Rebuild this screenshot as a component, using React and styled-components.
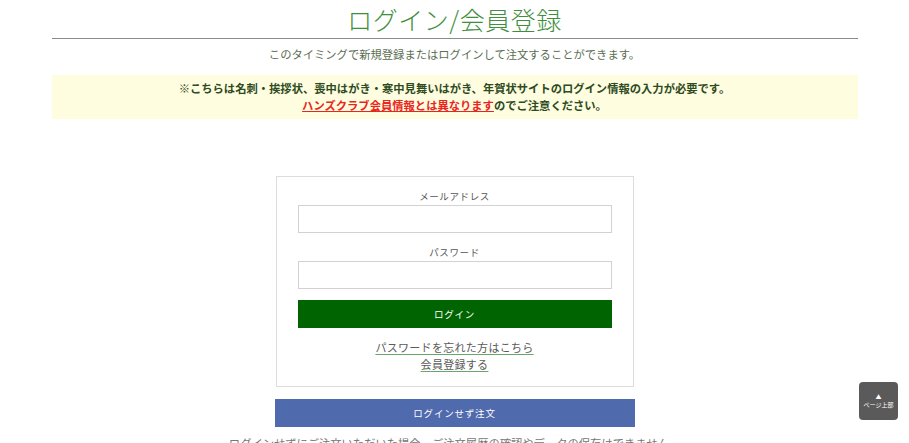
import React from "react";
import styled, { createGlobalStyle } from "styled-components";

const GlobalStyle = createGlobalStyle`
  body {
    margin: 0;
    background: #fff;
    font-family: "Noto Sans CJK JP", "Noto Sans", sans-serif;
  }
`;

const Page = styled.div`
  width: 806px;
  margin: 0 auto;
`;

const Title = styled.h1`
  margin: 0;
  height: 38px;
  border-bottom: 1px solid #8a8a8a;
  font-size: 25px;
  font-weight: 300;
  line-height: 38px;
  color: #3f8f3f;
  text-align: center;
  letter-spacing: 0.5px;
`;

const Lead = styled.p`
  margin: 7px 0 0;
  font-size: 11.3px;
  line-height: 16px;
  color: #5b6e52;
  text-align: center;
`;

const Notice = styled.div`
  margin-top: 13px;
  padding: 5px 0 5px;
  background: #fffde0;
  font-size: 11.3px;
  font-weight: 700;
  line-height: 17px;
  color: #2d4b1e;
  text-align: center;
`;

const Alert = styled.span`
  color: #e8261e;
  text-decoration: underline;
`;

const FormBox = styled.div`
  width: 314px;
  margin: 57px auto 0;
  padding: 12px 21px 13px;
  border: 1px solid #dcdcdc;
  display: flex;
  flex-direction: column;
`;

const Label = styled.div`
  font-size: 9.5px;
  line-height: 14px;
  color: #555;
  letter-spacing: 0.6px;
  text-align: center;
  margin-top: ${(p) => p.$gap || 0}px;
  margin-bottom: 2px;
`;

const Field = styled.input`
  box-sizing: border-box;
  width: 100%;
  height: 28px;
  border: 1px solid #d2d2d2;
  margin: 0;
`;

const LoginButton = styled.button`
  height: 28px;
  margin-top: 11px;
  border: none;
  background: #006400;
  color: #fff;
  font-family: inherit;
  font-size: 9.5px;
  letter-spacing: 0.8px;
`;

const Links = styled.div`
  margin-top: 11px;
  display: flex;
  flex-direction: column;
  align-items: center;
`;

const TextLink = styled.a`
  font-size: 11px;
  line-height: 17px;
  color: #5a5a5a;
  letter-spacing: 0.3px;
  text-decoration: underline;
  text-decoration-color: #66a866;
  text-underline-offset: 2px;
`;

const GuestButton = styled.button`
  display: block;
  width: 360px;
  height: 28px;
  margin: 12px auto 0;
  border: none;
  background: #4f6aad;
  color: #fff;
  font-family: inherit;
  font-size: 9.5px;
  letter-spacing: 0.8px;
`;

const Footnote = styled.p`
  margin: 8px 0 0;
  font-size: 11.3px;
  line-height: 16px;
  color: #777;
  text-align: center;
`;

const PageTop = styled.a`
  position: fixed;
  right: 11px;
  bottom: 23px;
  width: 39px;
  height: 38px;
  border-radius: 4px;
  background: #5a5a5a;
  color: #fff;
  display: flex;
  flex-direction: column;
  align-items: center;
  justify-content: center;
  font-size: 6px;
  line-height: 8px;
`;

export default function App() {
  return (
    <>
      <GlobalStyle />
      <Page>
        <Title>ログイン/会員登録</Title>
        <Lead>このタイミングで新規登録またはログインして注文することができます。</Lead>
        <Notice>
          ※こちらは名刺・挨拶状、喪中はがき・寒中見舞いはがき、年賀状サイトのログイン情報の入力が必要です。
          <br />
          <Alert>ハンズクラブ会員情報とは異なります</Alert>のでご注意ください。
        </Notice>
        <FormBox>
          <Label>メールアドレス</Label>
          <Field type="email" />
          <Label $gap={12}>パスワード</Label>
          <Field type="password" />
          <LoginButton>ログイン</LoginButton>
          <Links>
            <TextLink>パスワードを忘れた方はこちら</TextLink>
            <TextLink>会員登録する</TextLink>
          </Links>
        </FormBox>
        <GuestButton>ログインせず注文</GuestButton>
        <Footnote>ログインせずにご注文いただいた場合、ご注文履歴の確認やデータの保存はできません。</Footnote>
      </Page>
      <PageTop>
        <span>▲</span>
        <span>ページ上部</span>
      </PageTop>
    </>
  );
}
